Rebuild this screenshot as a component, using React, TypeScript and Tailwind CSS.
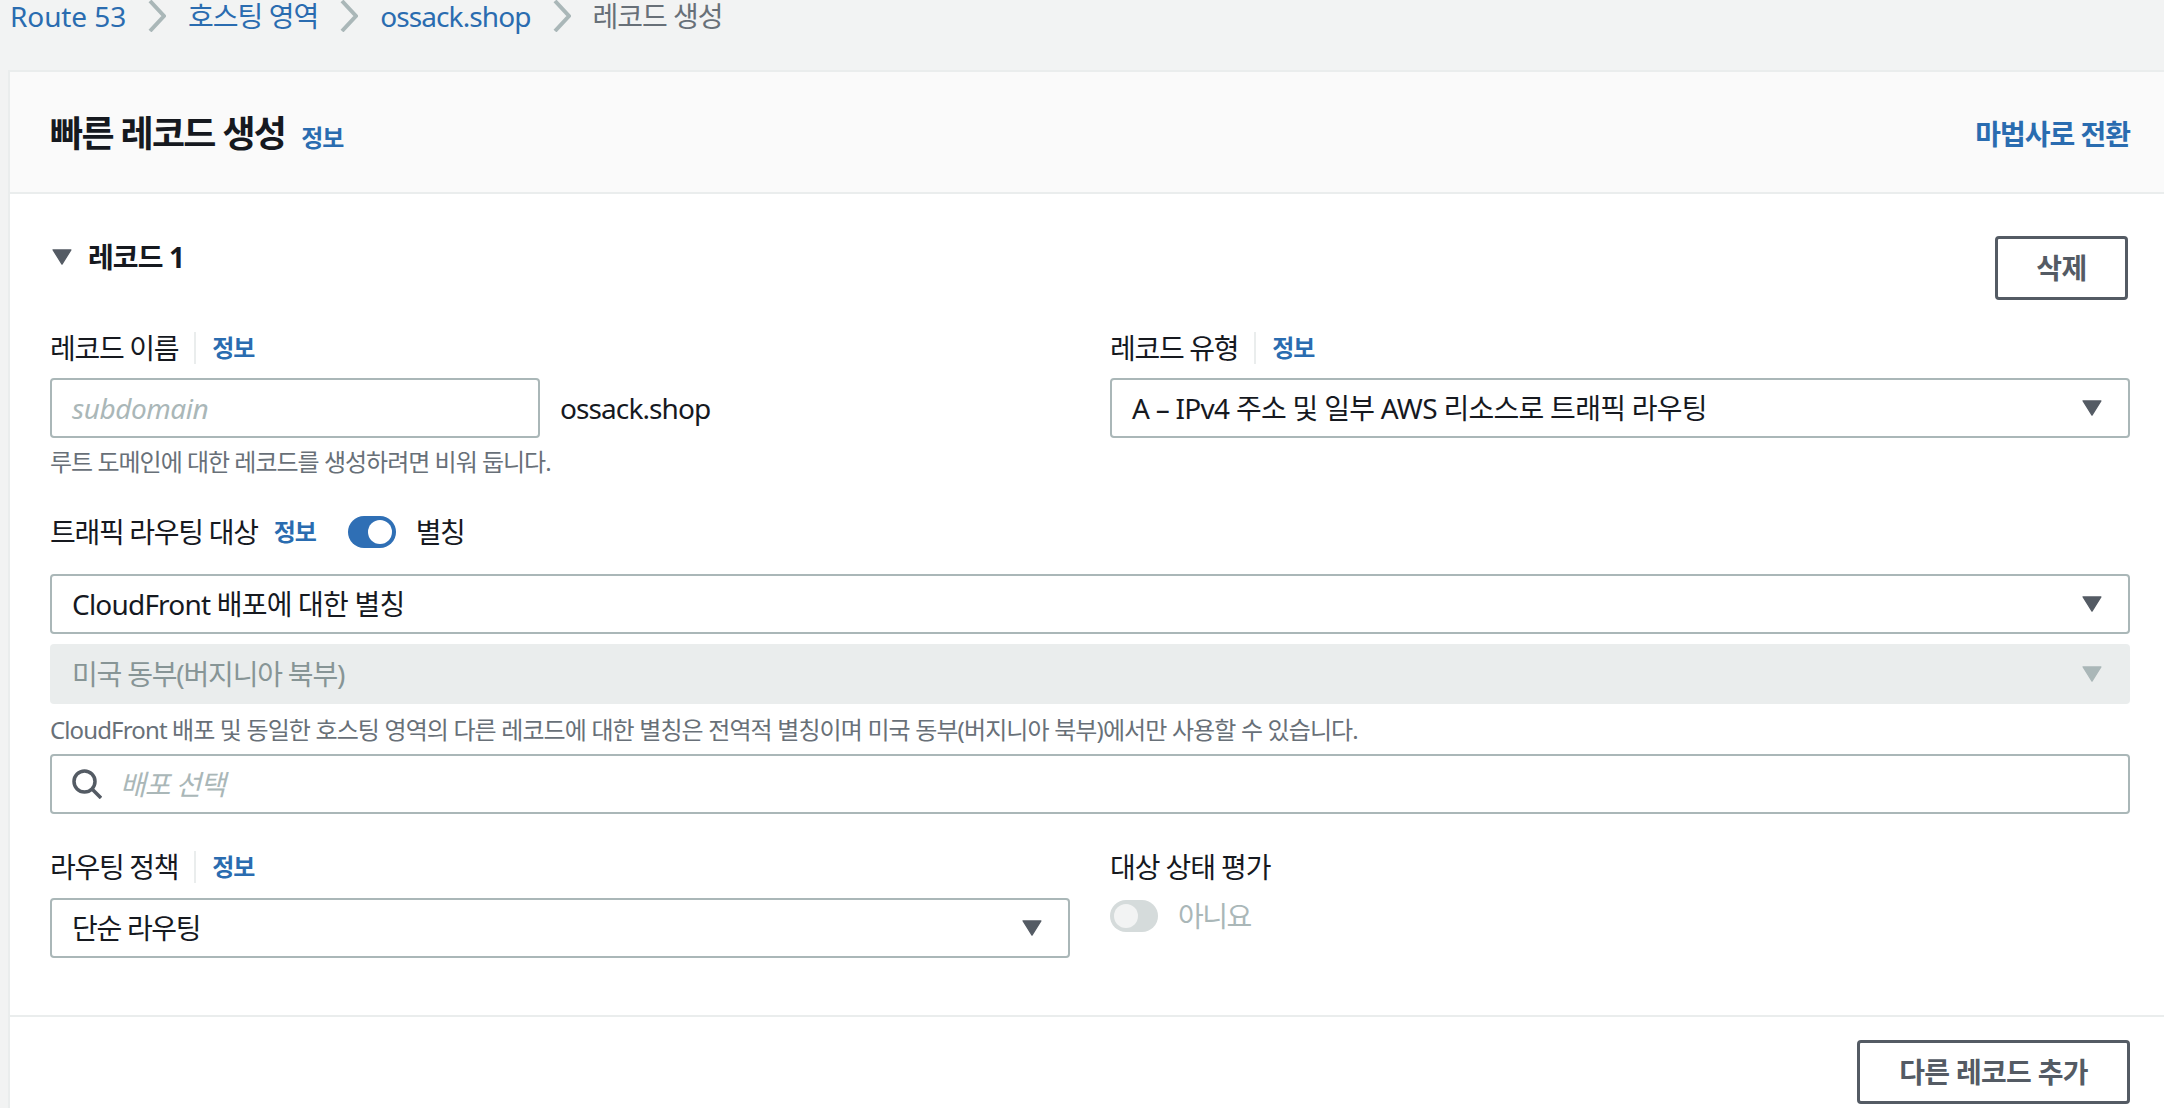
import React from 'react';

const FONT = 'font-["Noto_Sans","Noto_Sans_CJK_KR",sans-serif]';

const Caret = ({ disabled }: { disabled?: boolean }) => (
  <svg width="20" height="16" viewBox="0 0 22 18" className="shrink-0">
    <path d="M1 1 H21 L11 17 Z" fill={disabled ? '#aab7b8' : '#545b64'} stroke={disabled ? '#aab7b8' : '#545b64'} strokeWidth="1.5" strokeLinejoin="round" />
  </svg>
);

const Info = ({ className = '' }: { className?: string }) => (
  <a className={`text-[24px] leading-[32px] font-bold text-[#2a6cb0] tracking-[-1px] ${className}`}>정보</a>
);

const Label = ({ text }: { text: string }) => (
  <div className="flex items-center h-[32px]">
    <span className="text-[28px] leading-[32px] text-[#16191f] tracking-[-1.3px]">{text}</span>
    <span className="w-[2px] h-[32px] bg-[#eaeded] ml-[16px] mr-[16px]" />
    <Info />
  </div>
);

const Select = ({ value, tracking, className = '' }: { value: string; tracking: string; className?: string }) => (
  <div className={`flex items-center justify-between h-[60px] bg-white border-2 border-[#aab7b8] rounded-[4px] pl-[20px] pr-[26px] ${className}`}>
    <span className={`text-[28px] leading-[32px] text-[#16191f] ${tracking}`}>{value}</span>
    <Caret />
  </div>
);

const Toggle = ({ on }: { on: boolean }) => (
  <div className={`flex items-center w-[48px] h-[32px] rounded-full px-[4px] ${on ? 'justify-end bg-[#2f6fb5]' : 'justify-start bg-[#d5dbdb]'}`}>
    <span className={`w-[24px] h-[24px] rounded-full ${on ? 'bg-white' : 'bg-[#f2f3f3]'}`} />
  </div>
);

const Crumb = ({ text, tracking, current }: { text: string; tracking: string; current?: boolean }) => (
  <span className={`text-[28px] leading-[32px] ${tracking} ${current ? 'text-[#687078]' : 'text-[#2a6cb0]'}`}>{text}</span>
);

const Sep = () => (
  <svg width="18" height="32" viewBox="0 0 18 32" className="shrink-0">
    <path d="M2 1 L16 16 L2 31" fill="none" stroke="#aab7b8" strokeWidth="4" />
  </svg>
);

export default function App() {
  return (
    <div className={`w-[2164px] h-[1108px] overflow-hidden bg-[#f2f3f3] ${FONT}`}>
      <div className="h-[70px] pl-[10px] flex items-start gap-[22px]">
        <Crumb text="Route 53" tracking="tracking-[-0.1px]" />
        <Sep />
        <Crumb text="호스팅 영역" tracking="tracking-[-1px]" />
        <Sep />
        <Crumb text="ossack.shop" tracking="tracking-[-0.9px]" />
        <Sep />
        <Crumb text="레코드 생성" tracking="tracking-[-1px]" current />
      </div>
      <div className="ml-[8px] bg-white border-l-2 border-t-2 border-[#eaeded] h-[1038px]">
        <div className="h-[122px] bg-[#fafafa] border-b-2 border-[#eaeded] pl-[40px] pr-[34px] pt-[3px] flex items-center justify-between">
          <div className="flex items-baseline gap-[16px]">
            <h1 className="text-[36px] leading-[44px] font-bold text-[#16191f] tracking-[-1.7px]">빠른 레코드 생성</h1>
            <Info />
          </div>
          <a className="text-[28px] leading-[32px] font-bold text-[#2a6cb0] tracking-[-1px]">마법사로 전환</a>
        </div>

        <div className="pl-[40px] pr-[34px]">
          <div className="flex items-start justify-between pt-[42px] h-[138px]">
            <div className="flex items-center gap-[16px] h-[42px]">
              <svg width="20" height="16" viewBox="0 0 22 18" className="shrink-0 ml-[2px]">
                <path d="M1 1 H21 L11 17 Z" fill="#545b64" stroke="#545b64" strokeWidth="1.5" strokeLinejoin="round" />
              </svg>
              <span className="text-[28px] leading-[32px] font-bold text-[#16191f] tracking-[-0.9px]">레코드 1</span>
            </div>
            <button className="w-[133px] h-[64px] mr-[2px] border-[3px] border-[#545b64] rounded-[4px] bg-white text-[28px] font-bold text-[#545b64] tracking-[-0.5px]">삭제</button>
          </div>

          <div className="grid grid-cols-[1020px_1020px] gap-x-[40px]">
            <div>
              <Label text="레코드 이름" />
              <div className="flex items-center mt-[14px] gap-[20px]">
                <div className="w-[490px] h-[60px] bg-white border-2 border-[#aab7b8] rounded-[4px] pl-[20px] flex items-center">
                  <span className="text-[28px] leading-[32px] italic text-[#aab7b8] tracking-[-0.45px]">subdomain</span>
                </div>
                <span className="text-[28px] leading-[32px] text-[#16191f] tracking-[-0.9px]">ossack.shop</span>
              </div>
              <p className="mt-[8px] text-[24px] leading-[32px] text-[#687078] tracking-[-1px]">루트 도메인에 대한 레코드를 생성하려면 비워 둡니다.</p>
            </div>
            <div>
              <Label text="레코드 유형" />
              <Select value="A – IPv4 주소 및 일부 AWS 리소스로 트래픽 라우팅" tracking="tracking-[-0.72px]" className="mt-[14px]" />
            </div>
          </div>

          <div className="flex items-center h-[32px] mt-[38px]">
            <span className="text-[28px] leading-[32px] text-[#16191f] tracking-[-1.3px]">트래픽 라우팅 대상</span>
            <Info className="ml-[16px]" />
            <span className="ml-[32px]"><Toggle on /></span>
            <span className="ml-[20px] text-[28px] leading-[32px] text-[#16191f] tracking-[-1.5px]">별칭</span>
          </div>

          <Select value="CloudFront 배포에 대한 별칭" tracking="tracking-[-0.8px]" className="mt-[26px]" />
          <div className="flex items-center justify-between h-[60px] mt-[10px] bg-[#eaeded] rounded-[4px] pl-[22px] pr-[28px]">
            <span className="text-[28px] leading-[32px] text-[#879596] tracking-[-1.2px]">미국 동부(버지니아 북부)</span>
            <Caret disabled />
          </div>
          <p className="mt-[10px] text-[24px] leading-[32px] text-[#687078] tracking-[-0.87px]">CloudFront 배포 및 동일한 호스팅 영역의 다른 레코드에 대한 별칭은 전역적 별칭이며 미국 동부(버지니아 북부)에서만 사용할 수 있습니다.</p>
          <div className="mt-[8px] flex items-center h-[60px] bg-white border-2 border-[#aab7b8] rounded-[4px] pl-[20px]">
            <svg width="30" height="30" viewBox="0 0 30 30" className="shrink-0">
              <circle cx="12.5" cy="12.5" r="10.5" fill="none" stroke="#545b64" strokeWidth="3.5" />
              <path d="M20 20 L29 29" stroke="#545b64" strokeWidth="3.5" />
            </svg>
            <span className="ml-[18px] text-[28px] leading-[32px] italic text-[#aab7b8] tracking-[-1.1px]">배포 선택</span>
          </div>

          <div className="grid grid-cols-[1020px_1020px] gap-x-[40px] mt-[37px]">
            <div>
              <Label text="라우팅 정책" />
              <Select value="단순 라우팅" tracking="tracking-[-1.3px]" className="mt-[15px]" />
            </div>
            <div>
              <div className="h-[32px] text-[28px] leading-[32px] text-[#16191f] tracking-[-1.1px]">대상 상태 평가</div>
              <div className="flex items-center gap-[20px] mt-[17px]">
                <Toggle on={false} />
                <span className="text-[28px] leading-[32px] text-[#aab7b8] tracking-[-1.5px]">아니요</span>
              </div>
            </div>
          </div>
        </div>

        <div className="mt-[57px] border-t-2 border-[#eaeded] pr-[34px] pt-[23px] flex justify-end">
          <button className="w-[273px] h-[64px] border-[3px] border-[#545b64] rounded-[4px] bg-white text-[28px] font-bold text-[#545b64] tracking-[-0.7px]">다른 레코드 추가</button>
        </div>
      </div>
    </div>
  );
}
